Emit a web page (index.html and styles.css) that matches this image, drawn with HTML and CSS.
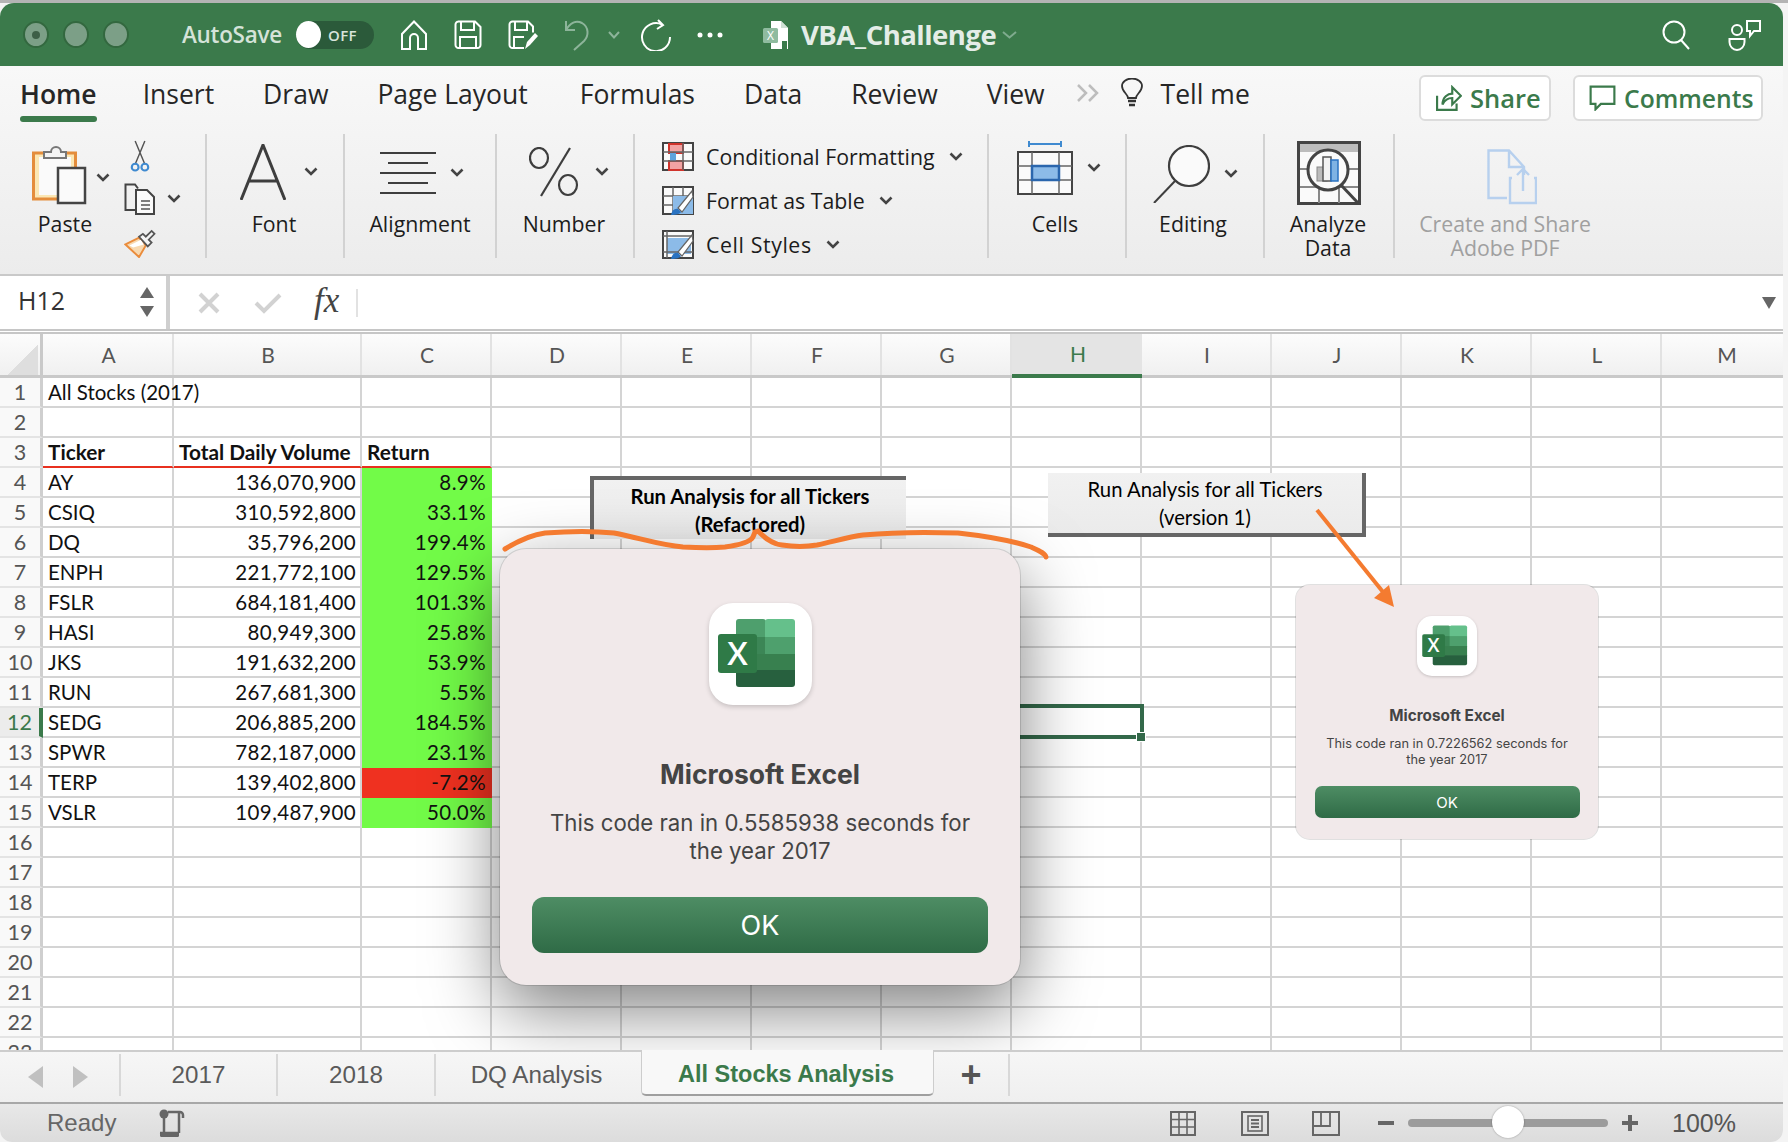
FILE: index.html
```html
<!DOCTYPE html>
<html lang="en">
<head>
<meta charset="utf-8">
<title>VBA_Challenge</title>
<link rel="stylesheet" href="styles.css">
</head>
<body>
<svg class="defs" aria-hidden="true">
  <symbol id="chev" viewBox="0 0 14 9"><path d="M1.500 1.500 7 7l5.500-5.500" fill="none" stroke="#444" stroke-width="2.600"/></symbol>
  <symbol id="xl" viewBox="0 0 103 102">
    <rect x="27" y="16" width="30" height="20" rx="3" fill="#4e9f6d"/>
    <rect x="56" y="16" width="30" height="20" rx="3" fill="#65c08b"/>
    <rect x="27" y="34" width="30" height="18" fill="#3c8656"/>
    <rect x="56" y="34" width="30" height="18" fill="#4ea06d"/>
    <rect x="27" y="51" width="59" height="17" fill="#38804f"/>
    <path d="M27 67h59v14a3 3 0 0 1-3 3H30a3 3 0 0 1-3-3z" fill="#27603e"/>
    <rect x="9" y="31" width="39" height="39" rx="3" fill="#2f7a47"/>
    <text x="28.500" y="62" text-anchor="middle" font-family="Open Sans" font-size="33" font-weight="600" fill="#fff">X</text>
  </symbol>
</svg>

<div class="window">
  <header class="titlebar">
    <span class="light dot"></span><span class="light"></span><span class="light"></span>
    <span class="autosave">AutoSave</span>
    <span class="toggle"><span class="knob"></span><span class="off">OFF</span></span>
    <svg class="ti m26" width="28" height="30" viewBox="0 0 28 30"><path d="M14 1.500 2 14v15h8V18a4 4 0 0 1 8 0v11h8V14z" fill="none" stroke="#fff" stroke-width="2"/></svg>
    <svg class="ti m26" width="28" height="30" viewBox="0 0 28 30"><path d="M4 1.500h17l5.500 5.500v18a3 3 0 0 1-3 3H4.500a3 3 0 0 1-3-3V4.500a3 3 0 0 1 3-3zM7 2v8h13V2M6 28V17h16v11" fill="none" stroke="#fff" stroke-width="2"/></svg>
    <svg class="ti m26" width="30" height="30" viewBox="0 0 30 30"><path d="M16 28H4.500a3 3 0 0 1-3-3V4.500a3 3 0 0 1 3-3H20l5 5v6M7 2v8h12V2M6 28V17h10" fill="none" stroke="#fff" stroke-width="2"/><path d="M17 29l2-7 8-9 3 3-8 9z" fill="#fff"/></svg>
    <svg class="ti m26" width="26" height="32" viewBox="0 0 26 32"><path d="M2 2v9h9M2 11C6 4 12 1 18 4c7 4 7 13 2 18L10 31" fill="none" stroke="#8db49a" stroke-width="2"/></svg>
    <svg class="tc" width="12" height="8" viewBox="0 0 12 8"><path d="M1 1l5 5.500L11 1" fill="none" stroke="#8db49a" stroke-width="2"/></svg>
    <svg class="ti redo" width="32" height="32" viewBox="0 0 32 32"><path d="M22 5.500A14 14 0 1 0 30 18M18 1l5 5-6 4" fill="none" stroke="#fff" stroke-width="2"/></svg>
    <svg class="ti dots" width="26" height="6" viewBox="0 0 26 6"><circle cx="3" cy="3" r="2.500" fill="#fff"/><circle cx="13" cy="3" r="2.500" fill="#fff"/><circle cx="23" cy="3" r="2.500" fill="#fff"/></svg>
    <svg class="ti file" width="30" height="30" viewBox="0 0 30 30"><path d="M9 1h10l7 7v21H9z" fill="#fff"/><path d="M19 1l7 7h-7z" fill="#cfe0d4"/><rect x="1" y="8" width="15" height="15" rx="1.500" fill="#8fbb9f"/><text x="8.500" y="20" text-anchor="middle" font-family="Open Sans" font-size="12" fill="#fff">X</text><rect x="20" y="21" width="5" height="8" fill="#3b7a4b"/></svg>
    <span class="doc">VBA_Challenge</span>
    <svg class="docchev" width="15" height="8" viewBox="0 0 15 8"><path d="M1 1l6.500 5.500L14 1" fill="none" stroke="#7fab8e" stroke-width="2"/></svg>
    <svg class="ti search" width="28" height="30" viewBox="0 0 28 30"><circle cx="12" cy="12" r="10.500" fill="none" stroke="#fff" stroke-width="2"/><path d="M19 20l8 9" stroke="#fff" stroke-width="2"/></svg>
    <svg class="ti people" width="34" height="32" viewBox="0 0 34 32"><circle cx="9" cy="11" r="5" fill="none" stroke="#fff" stroke-width="2"/><path d="M1.500 20h15v3a7.500 8 0 0 1-15 0zM19 2h13v10h-6l-4 5v-5h-3z" fill="none" stroke="#fff" stroke-width="2"/></svg>
  </header>

  <section class="ribbon">
    <nav class="tabsrow">
      <span class="rtab on">Home</span>
      <span class="rtab">Insert</span>
      <span class="rtab">Draw</span>
      <span class="rtab wide">Page Layout</span>
      <span class="rtab">Formulas</span>
      <span class="rtab">Data</span>
      <span class="rtab">Review</span>
      <span class="rtab">View</span>
      <svg class="more" width="24" height="18" viewBox="0 0 24 18"><path d="M2 1l8 8-8 8M13 1l8 8-8 8" fill="none" stroke="#bdbdbd" stroke-width="2.500"/></svg>
      <svg class="bulb" width="22" height="30" viewBox="0 0 22 30"><path d="M7 20c0-4-6-6-6-12a10 7.500 0 0 1 20 0c0 6-6 8-6 12z" fill="none" stroke="#333" stroke-width="1.800"/><path d="M7 23h8M8 27h6" stroke="#333" stroke-width="2.500"/></svg>
      <span class="rtab tell">Tell me</span>
      <span class="rbtn share"><svg width="26" height="26" viewBox="0 0 24 24"><path d="M1 10v13h18v-6M6 18c0-7 5-10 9-10V2l8 8-8 8v-6c-4 0-7 2-9 6z" fill="none" stroke="#3b7a4b" stroke-width="2"/></svg>Share</span>
      <span class="rbtn comments"><svg width="27" height="26" viewBox="0 0 25 24"><path d="M1.500 1.500h22v16H11l-5 5v-5H1.500z" fill="none" stroke="#3b7a4b" stroke-width="2"/></svg>Comments</span>
    </nav>
    <div class="groups">
      <div class="group g-paste">
        <div class="pastecol">
          <div class="iconrow">
            <svg width="56" height="62" viewBox="0 0 56 62"><rect x="1.500" y="10" width="42" height="46" fill="#fbe7b4" stroke="#e48d3c" stroke-width="3"/><rect x="7" y="14" width="32" height="38" fill="#fafafa"/><path d="M12 15v-6h7a5 5 0 0 1 10 0h5v6z" fill="#f4f4f4" stroke="#777" stroke-width="2"/><rect x="26" y="25" width="27" height="35" fill="#fafafa" stroke="#444" stroke-width="2.500"/></svg>
            <svg class="chev c-paste" width="14" height="9"><use href="#chev"/></svg>
          </div>
          <div class="label">Paste</div>
        </div>
        <div class="smallcol">
          <svg class="s-cut" width="20" height="33" viewBox="0 0 20 33"><path d="M5 25 15 1M15 25 5 1" stroke="#555" stroke-width="1.500"/><circle cx="5" cy="28" r="3.500" fill="none" stroke="#3f8ad0" stroke-width="2.200"/><circle cx="15" cy="28" r="3.500" fill="none" stroke="#3f8ad0" stroke-width="2.200"/></svg>
          <div class="s-copy"><svg width="32" height="32" viewBox="0 0 32 32"><path d="M11 27H1.500V1.500H11l3 4" fill="none" stroke="#444" stroke-width="2"/><path d="M12 7h11l7 7v17H12z" fill="#fafafa" stroke="#444" stroke-width="2"/><path d="M17 18h9M17 22h9M17 26h9" stroke="#555" stroke-width="1.500"/></svg><svg class="chev" width="14" height="9"><use href="#chev"/></svg></div>
          <svg class="s-brush" width="32" height="31" viewBox="0 0 32 31"><path d="M1 17 15 10l7 8-7 12z" fill="#f8d9b0" stroke="#ea8c3c" stroke-width="2"/><path d="M5 18l12-6 3 5-11 3z" fill="#fff"/><path d="M15 9l4-3 3 3 6-6 3 3-6 6 3 3-4 4z" fill="#f4f4f4" stroke="#555" stroke-width="1.800"/></svg>
        </div>
      </div>

      <div class="group g-big g-font">
        <div class="iconrow">
          <svg width="46" height="56" viewBox="0 0 46 56"><path d="M1 56 23 1l22 55M9 37h28" fill="none" stroke="#3e3e3e" stroke-width="3"/></svg>
          <svg class="chev" width="14" height="9"><use href="#chev"/></svg>
        </div>
        <div class="label">Font</div>
      </div>

      <div class="group g-big g-align">
        <div class="iconrow">
          <svg width="56" height="42" viewBox="0 0 56 42"><path d="M0 1h56M8 11h40M0 21h56M8 31h40M0 41h56" stroke="#3e3e3e" stroke-width="2"/></svg>
          <svg class="chev" width="14" height="9"><use href="#chev"/></svg>
        </div>
        <div class="label">Alignment</div>
      </div>

      <div class="group g-big g-num">
        <div class="iconrow">
          <svg width="50" height="50" viewBox="0 0 50 50"><ellipse cx="10" cy="11" rx="9" ry="10" fill="none" stroke="#3e3e3e" stroke-width="2.200"/><ellipse cx="39" cy="38" rx="9" ry="10" fill="none" stroke="#3e3e3e" stroke-width="2.200"/><path d="M41 1 12 49" stroke="#3e3e3e" stroke-width="2.200"/></svg>
          <svg class="chev" width="14" height="9"><use href="#chev"/></svg>
        </div>
        <div class="label">Number</div>
      </div>

      <div class="group g-styles">
        <div class="stylerow">
          <svg width="32" height="29" viewBox="0 0 32 29"><rect x="1" y="1" width="30" height="27" fill="#fafafa" stroke="#444" stroke-width="2"/><rect x="7" y="2" width="14" height="9" fill="#f2a3a3" stroke="#d0342c" stroke-width="2"/><rect x="7" y="19" width="14" height="9" fill="#f2a3a3" stroke="#d0342c" stroke-width="2"/><rect x="8" y="11" width="6" height="8" fill="#5ea3dc"/><path d="M1 10h30M1 19h30M21 1v27" stroke="#666" stroke-width="1.500"/></svg>
          <span>Conditional Formatting</span><svg class="chev" width="14" height="9"><use href="#chev"/></svg>
        </div>
        <div class="stylerow">
          <svg width="32" height="29" viewBox="0 0 32 29"><rect x="1" y="1" width="30" height="27" fill="#fafafa" stroke="#444" stroke-width="2"/><path d="M1 10h30M1 19h30M11 1v27M21 1v27" stroke="#666" stroke-width="1.500"/><path d="M11 10h20v18H11z" fill="#8cbbe8"/><path d="M30 5 16 22l4 4L31 11z" fill="#fff" stroke="#666" stroke-width="1.200"/><path d="M9 29c1-5 4-7 7-6l3 3c-1 2-5 3-10 3z" fill="#2a73c2"/></svg>
          <span>Format as Table</span><svg class="chev" width="14" height="9"><use href="#chev"/></svg>
        </div>
        <div class="stylerow">
          <svg width="32" height="29" viewBox="0 0 32 29"><rect x="1" y="1" width="30" height="27" fill="#fafafa" stroke="#444" stroke-width="2"/><path d="M5 8h24v16H5z" fill="#8cbbe8"/><path d="M1 6h30M1 22h30M5 1v27" stroke="#666" stroke-width="1.500"/><path d="M30 5 16 22l4 4L31 11z" fill="#fff" stroke="#666" stroke-width="1.200"/><path d="M9 29c1-5 4-7 7-6l3 3c-1 2-5 3-10 3z" fill="#2a73c2"/></svg>
          <span class="cs">Cell Styles</span><svg class="chev" width="14" height="9"><use href="#chev"/></svg>
        </div>
      </div>

      <div class="group g-big g-cells">
        <div class="iconrow">
          <svg width="56" height="54" viewBox="0 0 56 54"><path d="M12 0v6M44 0v6M12 3h32" stroke="#3f8ad0" stroke-width="2"/><rect x="1" y="11" width="54" height="42" fill="#fafafa" stroke="#444" stroke-width="2"/><path d="M1 25h54M1 39h54M15 11v42M42 11v42" stroke="#666" stroke-width="1.500"/><rect x="15" y="25" width="27" height="14" fill="#8cbbe8" stroke="#2a66ad" stroke-width="2.500"/></svg>
          <svg class="chev" width="14" height="9"><use href="#chev"/></svg>
        </div>
        <div class="label">Cells</div>
      </div>

      <div class="group g-big g-edit">
        <div class="iconrow">
          <svg width="57" height="58" viewBox="0 0 57 58"><ellipse cx="36" cy="21" rx="20" ry="20" fill="#fafafa" stroke="#3e3e3e" stroke-width="2.200"/><path d="M22 36 1 58" stroke="#3e3e3e" stroke-width="2"/></svg>
          <svg class="chev" width="14" height="9"><use href="#chev"/></svg>
        </div>
        <div class="label">Editing</div>
      </div>

      <div class="group g-big g-analyze">
        <div class="iconrow">
          <svg width="64" height="64" viewBox="0 0 64 64"><rect x="1.500" y="1.500" width="61" height="61" fill="#fafafa" stroke="#444" stroke-width="3"/><rect x="3" y="3" width="58" height="8" fill="#bdbdbd"/><path d="M3 28h58M3 46h58M22 46v16M42 46v16" stroke="#888" stroke-width="2"/><circle cx="31" cy="29" r="20" fill="#fafafa" stroke="#444" stroke-width="3"/><rect x="20" y="26" width="10" height="14" fill="#bbb" stroke="#888"/><rect x="26" y="16" width="8" height="24" fill="#f2f2f2" stroke="#555" stroke-width="1.500"/><rect x="34" y="19" width="7" height="21" fill="#7fb3e3" stroke="#2a73c2" stroke-width="1.500"/><path d="M44 44 62 63" stroke="#444" stroke-width="3"/></svg>
        </div>
        <div class="label">Analyze<br>Data</div>
      </div>

      <div class="group g-big g-pdf">
        <div class="iconrow">
          <svg width="50" height="56" viewBox="0 0 50 56"><path d="M20 49H1.500V1.500H22L37 18v8M22 2v16h15" fill="none" stroke="#b7d0ee" stroke-width="2.400"/><path d="M25 29h-2v25h26V29h-2M36 42V20M30 26l6-6 6 6" fill="none" stroke="#b7d0ee" stroke-width="2.400"/></svg>
        </div>
        <div class="label">Create and Share<br>Adobe PDF</div>
      </div>
    </div>
  </section>

  <div class="formulabar">
    <div class="namebox">
      <span class="nametext">H12</span>
      <span class="spin"><i class="up"></i><i class="down"></i></span>
    </div>
    <svg class="fb-x" width="22" height="22" viewBox="0 0 22 22"><path d="M2 2l18 18M20 2 2 20" stroke="#d2d2d2" stroke-width="4"/></svg>
    <svg class="fb-v" width="28" height="22" viewBox="0 0 28 22"><path d="M2 11l8 8L26 3" fill="none" stroke="#d2d2d2" stroke-width="4"/></svg>
    <span class="fx">fx</span>
    <span class="fb-sep"></span>
    <span class="fb-drop"></span>
  </div>

  <main class="sheet">
    <div class="colhead">
      <div class="corner"><span class="tri"></span></div>
      <div>A</div><div>B</div><div>C</div><div>D</div><div>E</div><div>F</div><div>G</div><div class="cur">H</div><div>I</div><div>J</div><div>K</div><div>L</div><div>M</div>
    </div>
    <div class="row"><div class="rh">1</div><div class="c">All Stocks (2017)</div><div class="c"></div><div class="c"></div></div>
    <div class="row"><div class="rh">2</div><div class="c"></div><div class="c"></div><div class="c"></div></div>
    <div class="row"><div class="rh">3</div><div class="c b red">Ticker</div><div class="c b red">Total Daily Volume</div><div class="c b red">Return</div></div>
    <div class="row"><div class="rh">4</div><div class="c">AY</div><div class="c n">136,070,900</div><div class="c n up">8.9%</div></div>
    <div class="row"><div class="rh">5</div><div class="c">CSIQ</div><div class="c n">310,592,800</div><div class="c n up">33.1%</div></div>
    <div class="row"><div class="rh">6</div><div class="c">DQ</div><div class="c n">35,796,200</div><div class="c n up">199.4%</div></div>
    <div class="row"><div class="rh">7</div><div class="c">ENPH</div><div class="c n">221,772,100</div><div class="c n up">129.5%</div></div>
    <div class="row"><div class="rh">8</div><div class="c">FSLR</div><div class="c n">684,181,400</div><div class="c n up">101.3%</div></div>
    <div class="row"><div class="rh">9</div><div class="c">HASI</div><div class="c n">80,949,300</div><div class="c n up">25.8%</div></div>
    <div class="row"><div class="rh">10</div><div class="c">JKS</div><div class="c n">191,632,200</div><div class="c n up">53.9%</div></div>
    <div class="row"><div class="rh">11</div><div class="c">RUN</div><div class="c n">267,681,300</div><div class="c n up">5.5%</div></div>
    <div class="row"><div class="rh cur">12</div><div class="c">SEDG</div><div class="c n">206,885,200</div><div class="c n up">184.5%</div></div>
    <div class="row"><div class="rh">13</div><div class="c">SPWR</div><div class="c n">782,187,000</div><div class="c n up">23.1%</div></div>
    <div class="row"><div class="rh">14</div><div class="c">TERP</div><div class="c n">139,402,800</div><div class="c n down">-7.2%</div></div>
    <div class="row"><div class="rh">15</div><div class="c">VSLR</div><div class="c n">109,487,900</div><div class="c n up">50.0%</div></div>
    <div class="row"><div class="rh">16</div><div class="c"></div><div class="c"></div><div class="c"></div></div>
    <div class="row"><div class="rh">17</div><div class="c"></div><div class="c"></div><div class="c"></div></div>
    <div class="row"><div class="rh">18</div><div class="c"></div><div class="c"></div><div class="c"></div></div>
    <div class="row"><div class="rh">19</div><div class="c"></div><div class="c"></div><div class="c"></div></div>
    <div class="row"><div class="rh">20</div><div class="c"></div><div class="c"></div><div class="c"></div></div>
    <div class="row"><div class="rh">21</div><div class="c"></div><div class="c"></div><div class="c"></div></div>
    <div class="row"><div class="rh">22</div><div class="c"></div><div class="c"></div><div class="c"></div></div>
    <div class="row"><div class="rh">23</div><div class="c"></div><div class="c"></div><div class="c"></div></div>

    <div class="selection"><span class="handle"></span></div>
    <button class="sheetbtn btn-ref">Run Analysis for all Tickers<br>(Refactored)</button>
    <button class="sheetbtn btn-v1">Run Analysis for all Tickers<br>(version 1)</button>

    <div class="dialog big-d">
      <div class="tile"><svg width="103" height="102"><use href="#xl"/></svg></div>
      <div class="d-title">Microsoft Excel</div>
      <div class="d-text">This code ran in 0.5585938 seconds for<br>the year 2017</div>
      <div class="d-ok">OK</div>
    </div>
    <div class="dialog small-d">
      <div class="tile"><svg width="60" height="60"><use href="#xl"/></svg></div>
      <div class="d-title">Microsoft Excel</div>
      <div class="d-text">This code ran in 0.7226562 seconds for<br>the year 2017</div>
      <div class="d-ok">OK</div>
    </div>

    <svg class="marks" width="1783" height="716" viewBox="0 334 1783 716">
      <path d="M505 549C518 541 530 535 545 533 570 531 595 531 614 533 640 538 660 545 683 547 700 548 715 548 725 547 740 545 750 542 753 537L755 532 758 531C765 538 772 544 782 545 795 547 805 547 817 545 832 542 848 537 863 535 895 532 930 532 958 533 985 536 1010 540 1031 547 1040 551 1045 553 1046 557" fill="none" stroke="#f47b30" stroke-width="5" stroke-linecap="round"/>
      <path d="M1317 510 1383 592" stroke="#f47b30" stroke-width="4"/>
      <path d="M1394 607 1374 598 1389 585z" fill="#f47b30"/>
    </svg>
  </main>

  <div class="sheettabs">
    <span class="arrow left"></span><span class="arrow right"></span>
    <span class="stab first">2017</span>
    <span class="stab">2018</span>
    <span class="stab dq">DQ Analysis</span>
    <span class="stab active">All Stocks Analysis</span>
    <span class="addtab">+</span>
  </div>

  <footer class="status">
    <span class="ready">Ready</span>
    <svg class="macro" width="30" height="30" viewBox="0 0 30 30"><circle cx="6" cy="6" r="4.500" fill="#666"/><path d="M6 10v15M10 4h12a3 3 0 0 1 3 3v3M21 4v21M2 25h19" fill="none" stroke="#666" stroke-width="2.500"/><rect x="2" y="24" width="19" height="5" rx="1.500" fill="#666"/></svg>
    <svg class="v-grid" width="26" height="25" viewBox="0 0 26 25"><rect x="1" y="1" width="24" height="23" fill="none" stroke="#666" stroke-width="2"/><path d="M1 8.500h24M1 16h24M9 1v23M17 1v23" stroke="#666" stroke-width="1.600"/></svg>
    <svg class="v-page" width="28" height="25" viewBox="0 0 28 25"><rect x="1" y="1" width="26" height="23" fill="none" stroke="#666" stroke-width="2"/><rect x="7" y="5" width="14" height="15" fill="none" stroke="#666" stroke-width="1.600"/><path d="M10 9h8M10 12.500h8M10 16h8" stroke="#666" stroke-width="1.800"/></svg>
    <svg class="v-break" width="28" height="25" viewBox="0 0 28 25"><rect x="1" y="1" width="26" height="23" fill="none" stroke="#666" stroke-width="2"/><path d="M1 15h17V1M9 1v14" fill="none" stroke="#666" stroke-width="1.800"/></svg>
    <span class="zminus"></span>
    <span class="ztrack"><span class="zknob"></span></span>
    <span class="zplus"></span>
    <span class="zpct">100%</span>
  </footer>
</div>
</body>
</html>
```

FILE: styles.css
```css
* { box-sizing: border-box; }
html, body { margin: 0; padding: 0; }
body {
  width: 1788px;
  height: 1142px;
  overflow: hidden;
  background: #f4f4f4;
  border-top: 3px solid #b4b4b4;
  font-family: "Open Sans", "Liberation Sans", sans-serif;
}
.defs { display: none; }
.window {
  width: 1783px;
  height: 1139px;
  display: flex;
  flex-direction: column;
  overflow: hidden;
  border-radius: 14px 14px 12px 12px;
  background: #fff;
}

/* title bar */
.titlebar {
  height: 63px;
  flex: none;
  display: flex;
  align-items: center;
  padding: 0 21px 0 23px;
  background: #3b7a4b;
  color: #fff;
}
.light {
  width: 26px;
  height: 27px;
  border-radius: 50%;
  background: #7c9f87;
  border: 2px solid #33683f;
  margin-right: 14px;
  display: flex;
  align-items: center;
  justify-content: center;
}
.light.dot::after {
  content: "";
  width: 8px;
  height: 8px;
  border-radius: 50%;
  background: #3d5f47;
}
.autosave {
  margin-left: 39px;
  font-size: 22.500px;
  font-weight: 600;
  color: #d5e3d9;
  width: 100px;
  letter-spacing: -.3px;
  white-space: nowrap;
}
.toggle {
  margin-left: 14px;
  width: 78px;
  height: 28px;
  border-radius: 14px;
  background: #2b5a3a;
  display: flex;
  align-items: center;
}
.knob { width: 25px; height: 27px; border-radius: 50%; background: #fff; }
.off { margin-left: 7px; font-size: 15px; font-weight: 600; color: #d9e4dc; letter-spacing: .4px; }
.ti { flex: none; }
.m26 { margin-left: 26px; }
.tc { margin-left: 18px; flex: none; }
.redo { margin-left: 20px; }
.dots { margin-left: 25px; }
.file { margin-left: 39px; }
.doc { margin-left: 9px; font-size: 27.500px; font-weight: 700; letter-spacing: -.5px; color: #e4ede7; white-space: nowrap; }
.docchev { margin-left: 6px; flex: none; }
.search { margin-left: auto; }
.people { margin-left: 38px; }

/* ribbon */
.ribbon {
  height: 210px;
  flex: none;
  background: linear-gradient(#f8f8f8, #ececec);
  border-bottom: 2px solid #c9c9c9;
}
.tabsrow {
  height: 60px;
  display: flex;
  align-items: center;
  padding: 0 20px;
  gap: 49px;
}
.rtab {
  position: relative;
  font-size: 26.500px;
  line-height: 34px;
  color: #262626;
  white-space: nowrap;
  margin-top: -4px;
}
.rtab.on { font-weight: 600; margin-right: -3px; }
.rtab.wide { margin-right: 3px; }
.rtab.on::after {
  content: "";
  position: absolute;
  left: 0;
  right: 0;
  top: 39px;
  height: 6px;
  border-radius: 3px;
  background: #3b7a4b;
}
.more { margin-left: -18px; margin-right: 3px; margin-top: -6px; flex: none; }
.bulb { margin-left: -31px; margin-top: -6px; flex: none; }
.tell { margin-left: -31px; }
.rbtn {
  display: flex;
  align-items: center;
  gap: 8px;
  height: 46px;
  border: 2px solid #dcdcdc;
  border-radius: 6px;
  background: #fff;
  color: #3b7a4b;
  font-weight: 600;
  white-space: nowrap;
}
.share { margin-left: auto; width: 132px; margin-top: 4px; padding-left: 15px; font-size: 25.500px; }
.comments { margin-left: -27px; width: 190px; margin-top: 4px; padding-left: 14px; font-size: 24.700px; }

.groups { display: flex; height: 124px; margin-top: 8px; }
.group {
  flex: none;
  height: 124px;
  border-right: 2px solid #d2d2d2;
}
.label {
  font-size: 21.300px;
  line-height: 24px;
  color: #1c1c1c;
  text-align: center;
  white-space: nowrap;
}
.iconrow { display: flex; flex: none; align-items: center; height: 78px; }
.chev { flex: none; }

.g-paste { width: 207px; display: flex; }
.pastecol { width: 130px; }
.pastecol .iconrow { padding-left: 32px; align-items: flex-start; padding-top: 9px; }
.c-paste { margin-left: 8px; margin-top: 30px; }
.smallcol { display: flex; flex-direction: column; margin-left: -6px; }
.s-cut { margin: 6px 0 0 6px; }
.s-copy { display: flex; align-items: center; gap: 11px; margin-top: 11px; }
.s-brush { margin-top: 13px; }

.g-big { display: flex; flex-direction: column; align-items: center; padding-right: 2px; }
.g-big .iconrow { align-self: flex-start; gap: 18px; }
.g-font { width: 138px; }
.g-font .iconrow { padding-left: 33px; padding-bottom: 3px; }
.g-align { width: 152px; padding-right: 0; }
.g-align .iconrow { padding-left: 35px; gap: 14px; padding-bottom: 1px; }
.g-num { width: 138px; }
.g-num .iconrow { padding-left: 32px; gap: 16px; padding-bottom: 3px; }
.g-cells { width: 138px; padding-right: 4px; }
.g-cells .iconrow { padding-left: 28px; gap: 14px; padding-bottom: 11px; }
.g-edit { width: 138px; padding-right: 4px; }
.g-edit .iconrow { padding-left: 26px; gap: 14px; padding-top: 1px; }
.g-analyze { width: 130px; }
.g-analyze .iconrow { padding-left: 32px; }
.g-pdf { width: 222px; border-right: 0; }
.g-pdf .iconrow { padding-left: 92px; padding-top: 8px; }
.g-pdf .label { color: #a0a0a0; }

.g-styles { width: 354px; padding: 0 0 0 27px; }
.stylerow {
  display: flex;
  align-items: center;
  height: 44px;
  font-size: 21.300px;
  color: #1c1c1c;
  white-space: nowrap;
}
.stylerow span { margin-left: 12px; margin-right: 14px; }
.stylerow .cs { letter-spacing: .6px; }

/* formula bar */
.formulabar {
  height: 58px;
  flex: none;
  display: flex;
  align-items: center;
  background: #fff;
  border-bottom: 5px double #c6c6c6;
}
.namebox {
  width: 170px;
  height: 100%;
  flex: none;
  display: flex;
  align-items: center;
  padding: 0 7px 0 18px;
  border-right: 4px solid #cfcfcf;
  font-size: 25px;
  color: #333;
}
.nametext { margin-top: -5px; }
.spin { margin-left: auto; display: flex; flex-direction: column; gap: 8px; margin-right: 5px; margin-top: -2px; }
.spin i { display: block; border-left: 7px solid transparent; border-right: 7px solid transparent; }
.spin .up { border-bottom: 11px solid #666; }
.spin .down { border-top: 11px solid #666; }
.fb-x { margin-left: 28px; flex: none; }
.fb-v { margin-left: 34px; flex: none; }
.fx {
  margin-left: 32px;
  font-family: "Liberation Serif", serif;
  font-style: italic;
  font-size: 35px;
  color: #444;
  line-height: 1;
  margin-top: -4px;
}
.fb-sep { margin-left: 17px; width: 2px; height: 28px; background: #e2e2e2; }
.fb-drop {
  margin-left: auto;
  margin-right: 7px;
  border-left: 7px solid transparent;
  border-right: 7px solid transparent;
  border-top: 12px solid #666;
}

/* sheet */
.sheet {
  position: relative;
  height: 716px;
  flex: none;
  overflow: hidden;
  font-family: Lato, "Liberation Sans", sans-serif;
  background: #fff;
}
.colhead {
  height: 44px;
  display: grid;
  grid-template-columns: 43px 131px 188px 130px repeat(10, 130px);
  background: linear-gradient(#fcfcfc, #f0f0f0);
  border-bottom: 3px solid #c9c9c9;
  font-size: 21px;
  color: #555;
}
.colhead div {
  display: flex;
  align-items: center;
  justify-content: center;
  border-right: 2px solid #e2e2e2;
  padding-left: 2px;
}
.colhead .corner { border-right: 3px solid #c9c9c9; position: relative; align-items: flex-end; justify-content: flex-start; padding-left: 0; }
.tri {
  width: 30px;
  height: 30px;
  margin-left: 8px;
  background: linear-gradient(135deg, transparent 50%, #dedede 50%);
}
.colhead .cur {
  background: #e4e4e4;
  color: #3b7a4b;
  border-right: 0;
  padding-bottom: 2px;
  box-shadow: 0 3px 0 #3b7a4b, inset 0 -1px 0 #3b7a4b;
}
.row {
  display: grid;
  grid-template-columns: 43px 131px 188px 130px 1fr;
  height: 30px;
  font-size: 20.500px;
  color: #111;
}
.row::after {
  content: "";
  border-bottom: 2px solid #d4d4d4;
  background: repeating-linear-gradient(90deg, transparent 0 128px, #d4d4d4 128px 130px);
}
.rh {
  display: flex;
  align-items: center;
  justify-content: center;
  background: #f9f9f9;
  border-right: 3px solid #cfcfcf;
  border-bottom: 2px solid #e4e4e4;
  color: #555;
  font-size: 21.500px;
}
.rh.cur { color: #3b7a4b; background: #ececec; border-right: 4px solid #3b7a4b; }
.c {
  display: flex;
  align-items: center;
  padding: 0 4px 0 5px;
  border-right: 2px solid #d4d4d4;
  border-bottom: 2px solid #d4d4d4;
  white-space: nowrap;
}
.c.b { font-weight: 700; font-size: 20.800px; padding-bottom: 2px; }
.c.red { border-bottom-color: #e8301f; }
.c.n { justify-content: flex-end; letter-spacing: .4px; }
.c.up { background: #72fb48; border-color: #72fb48; }
.c.down { background: #ef3120; border-color: #ef3120; }

.selection {
  position: absolute;
  left: 1010px;
  top: 370px;
  width: 134px;
  height: 35px;
  border: 4px solid #33694a;
  border-left: 0;
}
.handle {
  position: absolute;
  right: -6px;
  bottom: -7px;
  width: 10px;
  height: 10px;
  background: #33694a;
  border: 1px solid #fff;
}
.sheetbtn {
  position: absolute;
  padding: 0;
  border: 0;
  background: linear-gradient(#f1f1f1, #ebebeb);
  color: #000;
  font: 20.300px/28px Lato, "Liberation Sans", sans-serif;
  text-align: center;
}
.btn-ref {
  left: 590px;
  top: 142px;
  width: 316px;
  height: 63px;
  border-left: 4px solid #666;
  border-top: 4px solid #666;
  font-weight: 700;
}
.btn-v1 {
  left: 1048px;
  top: 139px;
  width: 318px;
  height: 64px;
  border-right: 4px solid #666;
  border-bottom: 4px solid #666;
}

.dialog {
  position: absolute;
  display: flex;
  flex-direction: column;
  align-items: center;
  background: #f1e9ea;
  font-family: Inter, "Liberation Sans", sans-serif;
  color: #444;
}
.tile { background: #fff; display: flex; flex: none; }
.d-title { font-weight: 700; white-space: nowrap; }
.d-text { text-align: center; white-space: nowrap; }
.d-ok {
  color: #fff;
  display: flex;
  align-items: center;
  justify-content: center;
  background: linear-gradient(#4e8d64, #2f6b46);
}
.big-d {
  left: 500px;
  top: 215px;
  width: 520px;
  height: 436px;
  border-radius: 26px;
  padding-top: 54px;
  box-shadow: 0 24px 70px rgba(0, 0, 0, .5), 0 0 0 1px rgba(0, 0, 0, .12);
}
.big-d .tile { width: 103px; height: 102px; border-radius: 24px; box-shadow: 0 2px 5px rgba(0, 0, 0, .18); }
.big-d .d-title { margin-top: 51px; font-size: 26.500px; line-height: 36px; }
.big-d .d-text { margin-top: 17px; font-size: 22.200px; line-height: 28px; }
.big-d .d-ok { margin-top: 32px; width: 456px; height: 56px; border-radius: 12px; font-size: 27px; }
.small-d {
  left: 1296px;
  top: 251px;
  width: 302px;
  height: 254px;
  border-radius: 14px;
  padding-top: 31px;
  box-shadow: 0 0 0 1px rgba(0, 0, 0, .12);
}
.small-d .tile { width: 60px; height: 60px; border-radius: 15px; box-shadow: 0 1px 3px rgba(0, 0, 0, .18); }
.small-d .d-title { margin-top: 30px; font-size: 15.300px; line-height: 20px; }
.small-d .d-text { margin-top: 10px; font-size: 12.800px; line-height: 16px; }
.small-d .d-ok { margin-top: 18px; width: 265px; height: 32px; border-radius: 7px; font-size: 15px; }
.marks { position: absolute; left: 0; top: 0; pointer-events: none; }

/* sheet tabs */
.sheettabs {
  height: 52px;
  flex: none;
  display: flex;
  align-items: stretch;
  background: linear-gradient(#f6f6f6, #efefef);
  border-top: 2px solid #cdcdcd;
  font-family: "Liberation Sans", sans-serif;
  font-size: 24.200px;
  color: #5a5a5a;
}
.arrow { width: 0; height: 0; margin-top: 14px; border-top: 11px solid transparent; border-bottom: 11px solid transparent; }
.arrow.left { margin-left: 28px; border-right: 15px solid #c0c0c0; }
.arrow.right { margin-left: 30px; border-left: 15px solid #c0c0c0; }
.stab {
  width: 158px;
  display: flex;
  align-items: center;
  justify-content: center;
  height: 42px;
  margin-top: 2px;
  border-right: 2px solid #d8d8d8;
  white-space: nowrap;
}
.stab.first { margin-left: 31px; border-left: 2px solid #d8d8d8; width: 159px; }
.stab.dq { width: 205px; border-right: 0; padding-right: 4px; }
.stab.active {
  width: 293px;
  height: 46px;
  margin-top: -2px;
  padding: 5px 3px 0 0;
  background: #f8f8f8;
  color: #3b7a4b;
  font-weight: 700;
  border: 1px solid #cdcdcd;
  border-top: 0;
  border-bottom: 2px solid #9f9f9f;
  border-radius: 0 0 5px 5px;
  font-size: 23.500px;
}
.addtab {
  width: 76px;
  height: 42px;
  margin-top: 2px;
  display: flex;
  align-items: center;
  justify-content: center;
  border-right: 2px solid #d8d8d8;
  font-size: 36px;
  font-weight: 700;
  color: #555;
}

/* status bar */
.status {
  height: 40px;
  flex: none;
  display: flex;
  align-items: center;
  background: linear-gradient(#e8e8e8, #dcdcdc);
  border-top: 2px solid #a8a8a8;
  color: #666;
  font-family: "Liberation Sans", sans-serif;
  font-size: 24px;
  padding-left: 47px;
}
.ready { width: 68px; }
.macro { margin-left: 43px; flex: none; }
.v-grid { margin-left: 982px; flex: none; }
.v-page { margin-left: 45px; flex: none; }
.v-break { margin-left: 43px; flex: none; }
.zminus { margin-left: 38px; width: 16px; height: 4px; background: #666; flex: none; }
.ztrack {
  position: relative;
  margin-left: 14px;
  width: 200px;
  height: 8px;
  flex: none;
  border-radius: 4px;
  background: #9c9c9c;
}
.zknob {
  position: absolute;
  left: 84px;
  top: -13px;
  width: 32px;
  height: 32px;
  border-radius: 50%;
  background: #fff;
  box-shadow: 0 0 2px rgba(0, 0, 0, .35);
}
.zplus {
  position: relative;
  margin-left: 14px;
  width: 16px;
  height: 4px;
  flex: none;
  background: #666;
}
.zplus::after {
  content: "";
  position: absolute;
  left: 6px;
  top: -6px;
  width: 4px;
  height: 16px;
  background: #666;
}
.zpct { margin-left: 34px; font-size: 25px; color: #555; }
```
